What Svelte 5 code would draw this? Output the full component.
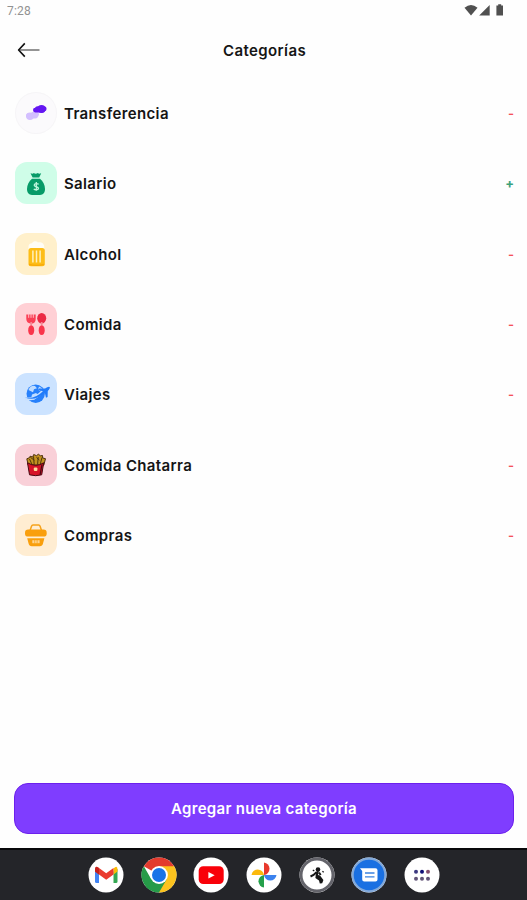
<script lang="ts">
  type Category = {
    name: string;
    icon: 'transfer' | 'salary' | 'beer' | 'food' | 'travel' | 'fries' | 'basket';
    sign: '+' | '-';
  };

  const categories: Category[] = [
    { name: 'Transferencia', icon: 'transfer', sign: '-' },
    { name: 'Salario', icon: 'salary', sign: '+' },
    { name: 'Alcohol', icon: 'beer', sign: '-' },
    { name: 'Comida', icon: 'food', sign: '-' },
    { name: 'Viajes', icon: 'travel', sign: '-' },
    { name: 'Comida Chatarra', icon: 'fries', sign: '-' },
    { name: 'Compras', icon: 'basket', sign: '-' },
  ];

  const apps = ['gmail', 'chrome', 'youtube', 'photos', 'runner', 'messages', 'drawer'];
</script>

<div class="screen">
  <div class="status-bar">
    <span class="clock">7:28</span>
    <svg class="status-icons" viewBox="0 0 42 14" width="42" height="14" fill="#505050">
      <path d="M.5 4.8Q7-.6 13.5 4.8L7 12.4Z" />
      <path d="M25.7 2v10.5H15.2z" />
      <path d="M34.2 1.2h3v1.2H39v10h-6.6v-10h1.8z" />
    </svg>
  </div>

  <header>
    <button class="back" aria-label="Volver">
      <svg viewBox="0 0 24 16" width="24" height="16" fill="none">
        <path d="M2.5 8h21" stroke="#949494" stroke-width="2" />
        <path d="M8.8 1.4L2.6 8l6.2 6.6" stroke="#111" stroke-width="1.6" stroke-linejoin="round" />
      </svg>
    </button>
    <h1>Categorías</h1>
  </header>

  <ul class="list">
    {#each categories as c}
      <li>
        <span class="tile {c.icon}">
          <svg viewBox="0 0 42 42" width="42" height="42">
            {#if c.icon === 'transfer'}
              <g fill="#d3bfff">
                <rect x="11" y="21" width="12" height="5.5" rx="2.7" />
                <circle cx="15" cy="24.2" r="3.8" />
                <rect x="16" y="19.8" width="8" height="5" rx="2.4" />
              </g>
              <g fill="#6416f2">
                <rect x="18" y="15.8" width="12" height="4.6" rx="2.3" />
                <rect x="20" y="14.3" width="11.5" height="5" rx="2.5" />
                <circle cx="26.5" cy="17" r="4" />
              </g>
            {:else if c.icon === 'salary'}
              <path d="M15.5 11.3q2.5 1 3.2-.2 2 1.5 4.2 0 1 1 3.3.2l-2 4.3h-6.6z" fill="#079b68" />
              <path d="M17 16.8h8c3 2.4 5 6.3 5 10.3 0 3.8-1.9 5.8-5 5.8h-8c-3.1 0-5-2-5-5.8 0-4 2-7.9 5-10.3z" fill="#079b68" />
              <path d="M23.6 22.4c-1-1.3-4.5-1-4.4.9.1 1.8 4.2 1.1 4.3 3 .1 1.9-3.5 2.1-4.7.6M21.3 20v8.8" fill="none" stroke="#bff6dd" stroke-width="1.3" />
            {:else if c.icon === 'beer'}
              <path d="M13.5 16.5v-3c0-2 1.5-3.5 3.5-3.3 1.3-2.2 4.5-2.5 6-.8 2.9-.5 6.2 1 6.2 4.1v3z" fill="#fffdf5" />
              <rect x="13.5" y="15" width="16.3" height="18.3" rx="2.5" fill="#fdbd17" />
              <path d="M17.9 17.5v12M21.5 17.5v12M25.1 17.5v12" stroke="#fff0bd" stroke-width="1.5" />
              <path d="M14 31.3q7.6 2.2 15.2 0" fill="none" stroke="#f8a909" stroke-width="1.4" />
            {:else if c.icon === 'food'}
              <path d="M11.3 11.5h9.4V16c0 2.6-1.5 4.4-3 4.4h-2.4c-2.2 0-4-1.8-4-4.4z" fill="#fa4056" />
              <path d="M13.7 10.8v4M16 10.8v4M18.3 10.8v4" stroke="#ffbdc5" stroke-width="1" />
              <ellipse cx="26.7" cy="15.3" rx="4.5" ry="5.3" fill="#ec2944" />
              <path d="M16.2 19v4M26.7 19v4" stroke="#f58a97" stroke-width="1.7" />
              <ellipse cx="16.2" cy="27.2" rx="3" ry="4.8" fill="#f9354b" />
              <ellipse cx="26.7" cy="27.2" rx="3" ry="4.8" fill="#f9354b" />
            {:else if c.icon === 'travel'}
              <circle cx="20.7" cy="20.7" r="9.2" fill="#2680fb" />
              <path d="M13.5 17q2-5 6.5-4l2 2.3-3 1-1 3zM17 21.5l4-1.5 3 2.5-5 4.5-3-1zM24 13.5l3.5 2-2.5 2.3-2-1z" fill="#bfdcff" />
              <path d="M10.2 25.7q9.8 1.6 18.3-8.2" fill="none" stroke="#c8e1ff" stroke-width="3" />
              <path d="M9.8 24.4q9.8 2.2 18.1-6.2l-5-1.4 1.2-1.4 6 .2q3-2.2 4.6-1.6.8 1.2-1.9 3.9l-.2 6-1.6.9-1.2-5.1Q20.3 28.6 9.8 24.4z" fill="#207bfa" />
            {:else if c.icon === 'fries'}
              <path d="M13.2 21l-1.4-6.2 2.8-1.2.5-1.4 2.6.8 1-2.5 2.8 1.2 1.8-1.5 2.2 1.6 2-.3.2 2.5 2.8.7-1.7 6.5z" fill="#c29120" stroke="#3d2505" stroke-width=".9" />
              <path d="M14.5 15l2.3 5M18.5 12.5l.7 8M23.2 13l-.6 7.5M27 13.5l-1.7 6.5M15.4 13.3l4 3M21.5 13.5l2.8 2.5" stroke="#51360b" stroke-width="1" fill="none" />
              <path d="M12.5 18.8q8.5 5 16.2 0l-2 12q-6 1.8-12.2 0z" fill="#d71328" stroke="#490711" stroke-width="1" />
              <path d="M27 20.5l-1.9 10.2" stroke="#4a0813" stroke-width="1.2" />
              <rect x="18.8" y="23.5" width="3.6" height="3.6" rx="1" fill="#ffd99b" />
            {:else}
              <path d="M14.9 17l1.6-4.7c.3-.8.7-1.2 1.5-1.2h5.6c.8 0 1.2.4 1.5 1.2l1.6 4.7" fill="none" stroke="#f6a21b" stroke-width="1.5" />
              <rect x="10" y="15.6" width="21.7" height="7" rx="3.2" fill="#f99f0d" />
              <path d="M12.2 24.2h17.2l-1.4 5.4c-.5 1.8-1.4 2.6-3.1 2.6h-8.2c-1.7 0-2.6-.8-3.1-2.6z" fill="#f99f0d" />
              <path d="M17.3 26.2h7.3v3h-7.3z" fill="#ffd591" />
              <path d="M19.7 26v3.2M22.1 26v3.2" stroke="#f99f0d" stroke-width=".7" />
            {/if}
          </svg>
        </span>
        <span class="name">{c.name}</span>
        <span class="sign" class:income={c.sign === '+'}>{c.sign}</span>
      </li>
    {/each}
  </ul>

  <button class="add">Agregar nueva categoría</button>

  <nav class="dock">
    {#each apps as app}
      <svg class="app" viewBox="0 0 36 36" width="36" height="36">
        <circle cx="18" cy="18" r="17.5" fill="#fff" />
        {#if app === 'gmail'}
          <path d="M7 12l4 2.4V26H8.5Q7 26 7 24.5z" fill="#4285f4" />
          <path d="M25.5 14.4l4-2.4v12.5q0 1.5-1.5 1.5h-2.5z" fill="#34a853" />
          <path d="M25.5 11.4q4-3.7 4 1v2.2l-4 3z" fill="#fbbc04" />
          <path d="M7 12.4q0-4.6 4-1.4l7.2 5.2 7.3-5.2v6.5l-7.3 5.3L11 17.5l-4-3z" fill="#ea3c2f" />
          <path d="M7 12.4q0-2.8 2-2.5 2 .6 2 2v5.6l-4-3z" fill="#c5221f" />
        {:else if app === 'chrome'}
          <path d="M18 18L2.84 9.25A17.5 17.5 0 0 1 33.16 9.25z" fill="#e33b2e" />
          <path d="M18 18V9.25h15.16A17.5 17.5 0 0 1 18 35.5z" fill="#fcc31e" />
          <path d="M2.84 9.25A17.5 17.5 0 0 0 18 35.5l7.58-13.1L18 18l-7.58 4.4z" fill="#269b48" />
          <circle cx="18" cy="18" r="8.9" fill="#fff" />
          <circle cx="18" cy="18" r="7" fill="#1a73e8" />
        {:else if app === 'youtube'}
          <rect x="5.7" y="9.3" width="25" height="17.7" rx="4.5" fill="#f90009" />
          <path d="M15.4 15v6.5l6.3-3.3z" fill="#fff" />
        {:else if app === 'photos'}
          <path d="M18 18V5.5a6.3 6.3 0 0 1 0 12.5z" fill="#e8382c" />
          <path d="M18 18h12.5A6.3 6.3 0 0 1 18 18z" fill="#3b82ee" />
          <path d="M18 18v12.5A6.3 6.3 0 0 1 18 18z" fill="#25a04b" />
          <path d="M18 18H5.5A6.3 6.3 0 0 1 18 18z" fill="#fbb90d" />
        {:else if app === 'runner'}
          <circle cx="18" cy="18" r="16" fill="#fff" stroke="#64646b" stroke-width="3" />
          <circle cx="19" cy="12.5" r="2.3" fill="#161616" />
          <path d="M18.8 13.5l-1 5.5M17.5 15.2l-3 2.8-3 1.5M20 15.5l1.7 2.5" fill="none" stroke="#161616" stroke-width="2" />
          <path d="M16.8 17.5l4.2 1 3.4 4.5-1.2 3.2-2.4.2-.8-3-3.6-2.4z" fill="#161616" />
          <path d="M13.8 13l1.5 1M23.4 14.2l1.3 1" stroke="#161616" stroke-width="1.3" />
        {:else if app === 'messages'}
          <circle cx="18" cy="18" r="16.4" fill="#1a70e2" stroke="#82a9da" stroke-width="2.2" />
          <path d="M9 11.3h15.5q2 0 2 2v9.3q0 2-2 2H13.2q-2 0-2-2V14z" fill="#fff" />
          <path d="M14 16h9.5M14 19.8h9.5" stroke="#3b82e0" stroke-width="1.3" />
        {:else}
          <g fill="#101078">
            <circle cx="12" cy="14.7" r="2" fill="#3d3980" />
            <circle cx="18" cy="14.7" r="2" />
            <circle cx="24" cy="14.7" r="2" fill="#855070" />
          </g>
          <g fill="#625578">
            <circle cx="12" cy="21.7" r="2" />
            <circle cx="18" cy="21.7" r="2" />
            <circle cx="24" cy="21.7" r="2" />
          </g>
        {/if}
      </svg>
    {/each}
  </nav>
</div>

<style>
  :global(body) {
    background: #fefefe;
  }

  .screen {
    display: flex;
    flex-direction: column;
    box-sizing: border-box;
    height: 900px;
    font-family: Inter, 'Liberation Sans', sans-serif;
    color: #151515;
  }

  button {
    border: 0;
    padding: 0;
    font: inherit;
    cursor: pointer;
  }

  .status-bar {
    display: flex;
    justify-content: space-between;
    height: 22px;
    padding: 0 21px 0 7px;
    box-sizing: border-box;
  }

  .clock {
    font: 12px/23px Roboto, sans-serif;
    letter-spacing: 0.2px;
    color: #929292;
  }

  .status-icons {
    margin-top: 3px;
  }

  header {
    display: grid;
    grid-template-columns: 24px 1fr 24px;
    align-items: center;
    height: 56px;
    padding: 0 14px 0 16px;
  }

  .back {
    display: flex;
    background: none;
  }

  h1 {
    margin: 2px 0 0;
    font-size: 15px;
    font-weight: 600;
    line-height: 20px;
    letter-spacing: 0.4px;
    text-align: center;
  }

  .list {
    flex: 1;
    margin: 0;
    padding: 0 13px 0 15px;
    list-style: none;
  }

  li {
    display: flex;
    align-items: center;
    height: 70.3px;
  }

  .tile {
    display: flex;
    flex: none;
    width: 42px;
    height: 42px;
    border-radius: 12px;
  }

  .transfer {
    border-radius: 50%;
    background: #fbfafc;
    box-shadow: inset 0 0 0 1px #f6f5f7;
  }

  .salary { background: #cffde8; }
  .beer { background: #fff0cb; }
  .food { background: #ffd0d5; }
  .travel { background: #cce3ff; }
  .fries { background: #f9d0d8; }
  .basket { background: #ffedd2; }

  .name {
    flex: 1;
    margin-left: 7px;
    padding-top: 1px;
    font-size: 15px;
    font-weight: 600;
    letter-spacing: 0.36px;
  }

  .sign {
    font-size: 13px;
    font-weight: 600;
    color: #f5525b;
  }

  .sign.income {
    font-weight: 700;
    color: #3ca17b;
  }

  .add {
    height: 51px;
    margin: 0 13px 14px 14px;
    border: 1px solid #6c20ec;
    border-radius: 14px;
    background: #7f3dff;
    color: #fff;
    font-size: 15px;
    font-weight: 600;
    letter-spacing: 0.3px;
  }

  .dock {
    display: flex;
    align-items: center;
    justify-content: center;
    gap: 16.7px;
    height: 52px;
    box-sizing: border-box;
    padding-left: 1px;
    border-top: 2px solid #08080a;
    background: #242529;
  }

  .app {
    flex: none;
  }
</style>
